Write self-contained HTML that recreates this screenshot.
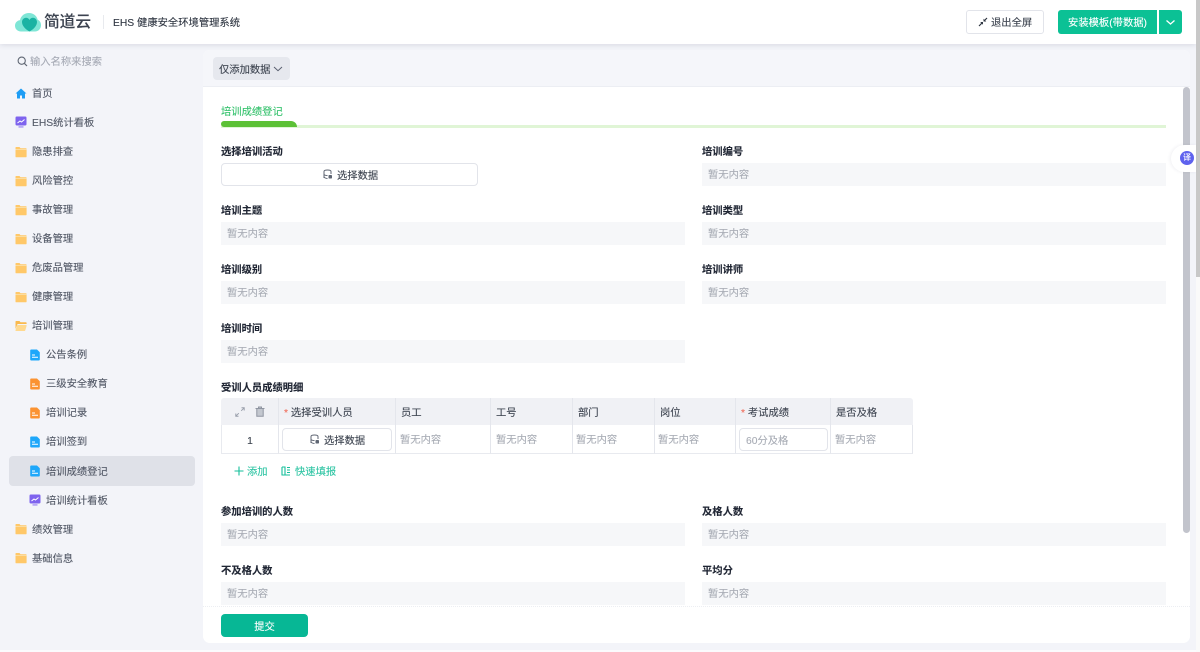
<!DOCTYPE html>
<html lang="zh"><head><meta charset="utf-8"><title>EHS 健康安全环境管理系统</title>
<style>
*{box-sizing:border-box}
html{background:#f3f4f9}
html,body{margin:0;padding:0;width:1200px;height:652px;overflow:hidden}
body{background:#f3f4f9;font-family:"Liberation Sans","Noto Sans CJK SC",sans-serif;font-size:10.3px;color:#1f2d3d;filter:blur(.3px);-webkit-text-stroke:.12px currentColor}
.a,.t,.l,.b,.n,.c,.h{position:absolute;white-space:nowrap}
.t{height:20px;line-height:24px}
.n{height:20px;line-height:24px;color:#525866;font-size:10.3px}
.l{height:20px;line-height:24px;font-weight:700;color:#1f2533;font-size:10.3px}
.b{height:23px;line-height:26px;width:464px;background:#f6f7f9;color:#a8acb5;padding-left:6px;font-size:10.3px}
.h{top:398px;height:27px;line-height:31px;background:#f0f1f5;border-right:1px solid #e4e6ec;color:#3d4450;padding-left:5px}
.c{top:425px;height:29px;line-height:31px;background:#fff;border-right:1px solid #e4e6ec;border-bottom:1px solid #e8eaef;color:#a8acb5;padding-left:4px}
svg{position:absolute;display:block}
i{font-style:normal;color:#f0705f}
</style></head><body>

<!-- top bar -->
<div class="a" style="left:0;top:0;width:1196px;height:44px;background:#fff;box-shadow:0 1px 5px rgba(40,50,80,.13);z-index:3"></div>
<svg style="left:14px;top:12px;z-index:4" width="28" height="20" viewBox="0 0 28 20"><path d="M7 19.500C3.500 19.500 1 17 1 13.800 1 10.800 3 8.500 6 8.100 7 3.800 10.500 1 15 1c4.300 0 7.800 2.800 8.700 6.800 2.200 1 3.300 3 3.300 5.400 0 3.500-2.700 6.300-6 6.300z" fill="#7fe6d6"/><path d="M15.500 19.500C11 17 8 13.500 8 10c0-2.500 1.800-4.300 4-4.300 1.600 0 2.800.8 3.500 2.300.7-1.500 1.900-2.300 3.500-2.300 2.200 0 4 1.800 4 4.300 0 3.500-3 7-7.500 9.500z" fill="#1bb3a3"/></svg>
<div class="t" style="left:44px;top:11px;font-size:15.700px;font-weight:500;color:#3c4350;z-index:4">简道云</div>
<div class="a" style="left:103px;top:15px;width:1px;height:14px;background:#e8eaee;z-index:4"></div>
<div class="t" style="left:113px;top:12px;color:#2e3541;font-size:10.300px;z-index:4">EHS 健康安全环境管理系统</div>

<div class="a" style="left:966px;top:10px;width:78px;height:24px;border:1px solid #e2e4ea;border-radius:3px;background:#fff;z-index:4"></div>
<svg style="left:978px;top:17px;z-index:4" width="10" height="10" viewBox="0 0 10 10"><path d="M1 9 4 6M9 1 6 4" stroke="#2e3541" stroke-width="1.200" fill="none"/><path d="M5 5H2.200L5 7.800zM5.500 4.500H8.300L5.500 1.700z" fill="#2e3541"/></svg>
<div class="t" style="left:991px;top:12px;color:#3d4450;z-index:4">退出全屏</div>
<div class="a" style="left:1058px;top:10px;width:99px;height:24px;background:#0bc195;border-radius:3px 0 0 3px;color:#fff;line-height:28px;text-align:center;z-index:4">安装模板(带数据)</div>
<div class="a" style="left:1159px;top:10px;width:23px;height:24px;background:#0bc195;border-radius:0 3px 3px 0;z-index:4"></div>
<svg style="left:1165px;top:19px;z-index:4" width="11" height="7" viewBox="0 0 11 7"><path d="M1.500 1.500 5.500 5 9.500 1.500" stroke="#fff" stroke-width="1.300" fill="none"/></svg>

<!-- sidebar -->
<svg style="left:17px;top:56px" width="11" height="11" viewBox="0 0 11 11"><circle cx="4.700" cy="4.700" r="3.600" stroke="#5f6673" stroke-width="1.100" fill="none"/><path d="M7.300 7.300 10 10" stroke="#5f6673" stroke-width="1.200"/></svg>
<div class="t" style="left:30px;top:51px;color:#a6aab5">输入名称来搜索</div>

<svg style="left:15px;top:88px" width="12" height="11" viewBox="0 0 12 11"><path d="M6 .5 .5 5.500h1.500V10.500h3V7.500h2v3h3V5.500h1.500z" fill="#1e9df5"/></svg>
<div class="n" style="left:32px;top:83px">首页</div>

<svg style="left:15px;top:116px" width="12" height="13" viewBox="0 0 12 13"><rect x=".5" y=".5" width="11" height="9" rx="1.200" fill="#7e63ee"/><path d="M3.500 10h5v1.800h-5z" fill="#b7a9f5"/><path d="M2.500 7 5 5l1.500 1 3-2.500" stroke="#fff" stroke-width="1" fill="none"/></svg>
<div class="n" style="left:32px;top:112px">EHS统计看板</div>

<svg style="left:15px;top:146px" width="12" height="12" viewBox="0 0 12 12"><path d="M1.200 1h3.300l1 1.200h5.300c.5 0 .8.300.8.800v7.500c0 .5-.3.800-.8.800H1.200c-.5 0-.7-.3-.7-.8V1.800C.5 1.300.7 1 1.200 1z" fill="#ffc869"/><path d="M.5 3.500h11" stroke="#fbe3b0" stroke-width=".8"/></svg>
<div class="n" style="left:32px;top:141px">隐患排查</div>
<svg style="left:15px;top:175px" width="12" height="12" viewBox="0 0 12 12"><path d="M1.200 1h3.300l1 1.200h5.300c.5 0 .8.300.8.800v7.500c0 .5-.3.800-.8.800H1.200c-.5 0-.7-.3-.7-.8V1.800C.5 1.300.7 1 1.200 1z" fill="#ffc869"/><path d="M.5 3.500h11" stroke="#fbe3b0" stroke-width=".8"/></svg>
<div class="n" style="left:32px;top:170px">风险管控</div>
<svg style="left:15px;top:204px" width="12" height="12" viewBox="0 0 12 12"><path d="M1.200 1h3.300l1 1.200h5.300c.5 0 .8.300.8.800v7.500c0 .5-.3.800-.8.800H1.200c-.5 0-.7-.3-.7-.8V1.800C.5 1.300.7 1 1.200 1z" fill="#ffc869"/><path d="M.5 3.500h11" stroke="#fbe3b0" stroke-width=".8"/></svg>
<div class="n" style="left:32px;top:199px">事故管理</div>
<svg style="left:15px;top:233px" width="12" height="12" viewBox="0 0 12 12"><path d="M1.200 1h3.300l1 1.200h5.300c.5 0 .8.300.8.800v7.500c0 .5-.3.800-.8.800H1.200c-.5 0-.7-.3-.7-.8V1.800C.5 1.300.7 1 1.200 1z" fill="#ffc869"/><path d="M.5 3.500h11" stroke="#fbe3b0" stroke-width=".8"/></svg>
<div class="n" style="left:32px;top:228px">设备管理</div>
<svg style="left:15px;top:262px" width="12" height="12" viewBox="0 0 12 12"><path d="M1.200 1h3.300l1 1.200h5.300c.5 0 .8.300.8.800v7.500c0 .5-.3.800-.8.800H1.200c-.5 0-.7-.3-.7-.8V1.800C.5 1.300.7 1 1.200 1z" fill="#ffc869"/><path d="M.5 3.500h11" stroke="#fbe3b0" stroke-width=".8"/></svg>
<div class="n" style="left:32px;top:257px">危废品管理</div>
<svg style="left:15px;top:291px" width="12" height="12" viewBox="0 0 12 12"><path d="M1.200 1h3.300l1 1.200h5.300c.5 0 .8.300.8.800v7.500c0 .5-.3.800-.8.800H1.200c-.5 0-.7-.3-.7-.8V1.800C.5 1.300.7 1 1.200 1z" fill="#ffc869"/><path d="M.5 3.500h11" stroke="#fbe3b0" stroke-width=".8"/></svg>
<div class="n" style="left:32px;top:286px">健康管理</div>
<svg style="left:15px;top:320px" width="12" height="12" viewBox="0 0 12 12"><path d="M1.200 1h3.300l1 1.200h5.300c.5 0 .8.300.8.800v1H3.200c-.5 0-.8.200-1 .7L.5 9V1.800C.5 1.300.7 1 1.200 1z" fill="#f9b94e"/><path d="M2.700 5h8.200c.6 0 .9.400.7.900L10.300 10.200c-.2.500-.5.800-1 .8H1.200c-.6 0-.9-.4-.7-.9L2 5.700c.1-.4.300-.7.700-.7z" fill="#ffd98f"/></svg>
<div class="n" style="left:32px;top:315px">培训管理</div>

<svg style="left:30px;top:349px" width="10" height="12" viewBox="0 0 10 12"><path d="M1.200 .5H7L9.800 3.300v7.200c0 .6-.4 1-1 1H1.200c-.6 0-1-.4-1-1v-9c0-.6.400-1 1-1z" fill="#1ea7fa"/><path d="M2 6h3M2 8.300h6" stroke="#fff" stroke-width="1"/></svg>
<div class="n" style="left:46px;top:344px">公告条例</div>
<svg style="left:30px;top:378px" width="10" height="12" viewBox="0 0 10 12"><path d="M1.200 .5H7L9.800 3.300v7.200c0 .6-.4 1-1 1H1.200c-.6 0-1-.4-1-1v-9c0-.6.400-1 1-1z" fill="#fb9332"/><path d="M2 6h3M2 8.300h6" stroke="#fff" stroke-width="1"/></svg>
<div class="n" style="left:46px;top:373px">三级安全教育</div>
<svg style="left:30px;top:407px" width="10" height="12" viewBox="0 0 10 12"><path d="M1.200 .5H7L9.800 3.300v7.200c0 .6-.4 1-1 1H1.200c-.6 0-1-.4-1-1v-9c0-.6.400-1 1-1z" fill="#fb9332"/><path d="M2 6h3M2 8.300h6" stroke="#fff" stroke-width="1"/></svg>
<div class="n" style="left:46px;top:402px">培训记录</div>
<svg style="left:30px;top:436px" width="10" height="12" viewBox="0 0 10 12"><path d="M1.200 .5H7L9.800 3.300v7.200c0 .6-.4 1-1 1H1.200c-.6 0-1-.4-1-1v-9c0-.6.400-1 1-1z" fill="#1ea7fa"/><path d="M2 6h3M2 8.300h6" stroke="#fff" stroke-width="1"/></svg>
<div class="n" style="left:46px;top:431px">培训签到</div>
<div class="a" style="left:9px;top:456px;width:186px;height:30px;background:#dfe1e8;border-radius:4px"></div>
<svg style="left:30px;top:465px" width="10" height="12" viewBox="0 0 10 12"><path d="M1.200 .5H7L9.800 3.300v7.200c0 .6-.4 1-1 1H1.200c-.6 0-1-.4-1-1v-9c0-.6.400-1 1-1z" fill="#1ea7fa"/><path d="M2 6h3M2 8.300h6" stroke="#fff" stroke-width="1"/></svg>
<div class="n" style="left:46px;top:461px">培训成绩登记</div>
<svg style="left:29px;top:494px" width="12" height="13" viewBox="0 0 12 13"><rect x=".5" y=".5" width="11" height="9" rx="1.200" fill="#7e63ee"/><path d="M3.500 10h5v1.800h-5z" fill="#b7a9f5"/><path d="M2.500 7 5 5l1.500 1 3-2.500" stroke="#fff" stroke-width="1" fill="none"/></svg>
<div class="n" style="left:46px;top:490px">培训统计看板</div>
<svg style="left:15px;top:523px" width="12" height="12" viewBox="0 0 12 12"><path d="M1.200 1h3.300l1 1.200h5.300c.5 0 .8.300.8.800v7.500c0 .5-.3.800-.8.800H1.200c-.5 0-.7-.3-.7-.8V1.800C.5 1.300.7 1 1.200 1z" fill="#ffc869"/><path d="M.5 3.500h11" stroke="#fbe3b0" stroke-width=".8"/></svg>
<div class="n" style="left:32px;top:519px">绩效管理</div>
<svg style="left:15px;top:552px" width="12" height="12" viewBox="0 0 12 12"><path d="M1.200 1h3.300l1 1.200h5.300c.5 0 .8.300.8.800v7.500c0 .5-.3.800-.8.800H1.200c-.5 0-.7-.3-.7-.8V1.800C.5 1.300.7 1 1.200 1z" fill="#ffc869"/><path d="M.5 3.500h11" stroke="#fbe3b0" stroke-width=".8"/></svg>
<div class="n" style="left:32px;top:548px">基础信息</div>

<!-- card -->
<div class="a" style="left:203px;top:50px;width:987px;height:593px;background:#fff;border-radius:7px;overflow:hidden">
  <div class="a" style="left:0;top:0;width:987px;height:37px;background:#f5f6fa;border-bottom:1px solid #eceef3"></div>
</div>
<div class="a" style="left:213px;top:57px;width:77px;height:23px;background:#e6e8ee;border-radius:4px"></div>
<div class="t" style="left:219px;top:59px;color:#3d4450">仅添加数据</div>
<svg style="left:273px;top:66px" width="10" height="6" viewBox="0 0 10 6"><path d="M1 1 5 4.700 9 1" stroke="#5a6070" stroke-width="1" fill="none"/></svg>

<!-- tab -->
<div class="t" style="left:221px;top:101px;color:#35c26d">培训成绩登记</div>
<div class="a" style="left:221px;top:125px;width:945px;height:3px;background:#e0f5d6"></div>
<div class="a" style="left:221px;top:121px;width:76px;height:6px;background:#5cc136;border-radius:3px 6px 0 3px"></div>

<!-- fields -->
<div class="l" style="left:221px;top:141px">选择培训活动</div>
<div class="a" style="left:221px;top:163px;width:257px;height:23px;border:1px solid #e2e4ea;border-radius:4px;background:#fff"></div>
<svg style="left:323px;top:169px" width="10" height="11" viewBox="0 0 10 11"><path d="M1 9V2.500C1 1.500 2 1 4.500 1S8 1.500 8 2.500V5M1 5c0 1 1.500 1.500 3.500 1.500M1 7.500C1 8.500 2.500 9.500 4.500 9.500" stroke="#5f6673" fill="none"/><rect x="5.500" y="6" width="3.500" height="3.500" rx=".8" fill="#5f6673"/></svg>
<div class="t" style="left:337px;top:165px;color:#3d4450">选择数据</div>
<div class="l" style="left:702px;top:141px">培训编号</div>
<div class="b" style="left:702px;top:163px">暂无内容</div>
<div class="l" style="left:221px;top:200px">培训主题</div>
<div class="b" style="left:221px;top:222px">暂无内容</div>
<div class="l" style="left:702px;top:200px">培训类型</div>
<div class="b" style="left:702px;top:222px">暂无内容</div>
<div class="l" style="left:221px;top:259px">培训级别</div>
<div class="b" style="left:221px;top:281px">暂无内容</div>
<div class="l" style="left:702px;top:259px">培训讲师</div>
<div class="b" style="left:702px;top:281px">暂无内容</div>
<div class="l" style="left:221px;top:318px">培训时间</div>
<div class="b" style="left:221px;top:340px">暂无内容</div>

<!-- table -->
<div class="l" style="left:221px;top:377px">受训人员成绩明细</div>
<div class="h" style="left:221px;width:58px;border-radius:3px 0 0 0"></div>
<svg style="left:235px;top:407px" width="10" height="10" viewBox="0 0 10 10"><path d="M.8 9.200 3.800 6.200M.8 6.500v2.700h2.700M9.200.8 6.200 3.800M6.500.8h2.700v2.700" stroke="#9aa0ac" fill="none"/></svg>
<svg style="left:255px;top:406px" width="10" height="11" viewBox="0 0 10 11"><path d="M.5 2.500h9M3.500 2.500V1h3v1.500M1.800 2.500v7.700h6.400V2.500z" stroke="#8f95a1" fill="#c3c7cf"/></svg>
<div class="h" style="left:279px;width:117px"><i>*</i> 选择受训人员</div>
<div class="h" style="left:396px;width:95px">员工</div>
<div class="h" style="left:491px;width:82px">工号</div>
<div class="h" style="left:573px;width:82px">部门</div>
<div class="h" style="left:655px;width:81px">岗位</div>
<div class="h" style="left:736px;width:95px"><i>*</i> 考试成绩</div>
<div class="h" style="left:831px;width:82px;border-radius:0 3px 0 0;border-right:0">是否及格</div>
<div class="c" style="left:221px;width:58px;border-left:1px solid #e8eaef;text-align:center;color:#3d4450;padding:0;line-height:33px">1</div>
<div class="c" style="left:279px;width:117px"></div>
<div class="a" style="left:282px;top:428px;width:110px;height:23px;border:1px solid #e2e4ea;border-radius:4px;background:#fff"></div>
<svg style="left:310px;top:434px" width="10" height="11" viewBox="0 0 10 11"><path d="M1 9V2.500C1 1.500 2 1 4.500 1S8 1.500 8 2.500V5M1 5c0 1 1.500 1.500 3.500 1.500M1 7.500C1 8.500 2.500 9.500 4.500 9.500" stroke="#5f6673" fill="none"/><rect x="5.500" y="6" width="3.500" height="3.500" rx=".8" fill="#5f6673"/></svg>
<div class="t" style="left:324px;top:430px;color:#3d4450">选择数据</div>
<div class="c" style="left:396px;width:95px">暂无内容</div>
<div class="c" style="left:491px;width:82px;padding-left:5px">暂无内容</div>
<div class="c" style="left:573px;width:82px;padding-left:3px">暂无内容</div>
<div class="c" style="left:655px;width:81px;padding-left:3px">暂无内容</div>
<div class="c" style="left:736px;width:95px"></div>
<div class="a" style="left:739px;top:428px;width:89px;height:23px;border:1px solid #e2e4ea;border-radius:4px;background:#fff;line-height:25px;padding-left:6px;color:#a8acb5">60分及格</div>
<div class="c" style="left:831px;width:82px">暂无内容</div>

<svg style="left:234px;top:466px" width="10" height="10" viewBox="0 0 10 10"><path d="M5 .5v9M.5 5h9" stroke="#16bf9b" stroke-width="1.100"/></svg>
<div class="t" style="left:247px;top:461px;color:#2fc5a4">添加</div>
<svg style="left:281px;top:466px" width="10" height="10" viewBox="0 0 10 10"><path d="M1 1v8h8M1 1h3v8M6 1.500h3M6 4h3M6 6.500h3" stroke="#16bf9b" stroke-width="1.100" fill="none"/></svg>
<div class="t" style="left:295px;top:461px;color:#2fc5a4">快速填报</div>

<div class="l" style="left:221px;top:501px">参加培训的人数</div>
<div class="b" style="left:221px;top:523px">暂无内容</div>
<div class="l" style="left:702px;top:501px">及格人数</div>
<div class="b" style="left:702px;top:523px">暂无内容</div>
<div class="l" style="left:221px;top:560px">不及格人数</div>
<div class="b" style="left:221px;top:582px">暂无内容</div>
<div class="l" style="left:702px;top:560px">平均分</div>
<div class="b" style="left:702px;top:582px">暂无内容</div>

<!-- footer -->
<div class="a" style="left:203px;top:606px;width:987px;height:37px;background:#fff;border-top:1px dotted #eceef2;border-radius:0 0 7px 7px"></div>
<div class="a" style="left:221px;top:614px;width:87px;height:23px;background:#07b795;border-radius:4px;color:#fff;text-align:center;line-height:27px">提交</div>

<!-- scrollbars -->
<div class="a" style="left:1183px;top:87px;width:7px;height:446px;background:#c2c4cc;border-radius:3.500px"></div>
<div class="a" style="left:1196px;top:0;width:4px;height:652px;background:#fafafa"></div>
<div class="a" style="left:1196px;top:0;width:4px;height:277px;background:#c8c8c8;z-index:5"></div>
<div class="a" style="left:0;top:650px;width:1196px;height:2px;background:#fbfbfd"></div>

<!-- floating -->
<div class="a" style="left:1171px;top:145px;width:25px;height:27px;background:#fff;border-radius:14px 0 0 14px;box-shadow:-1px 0 3px rgba(60,70,100,.08);z-index:6"></div>
<div class="a" style="left:1180px;top:151px;width:14px;height:14px;background:#5f62ee;border-radius:50%;color:#fff;font-size:8px;line-height:14px;text-align:center;z-index:7">译</div>
</body></html>
